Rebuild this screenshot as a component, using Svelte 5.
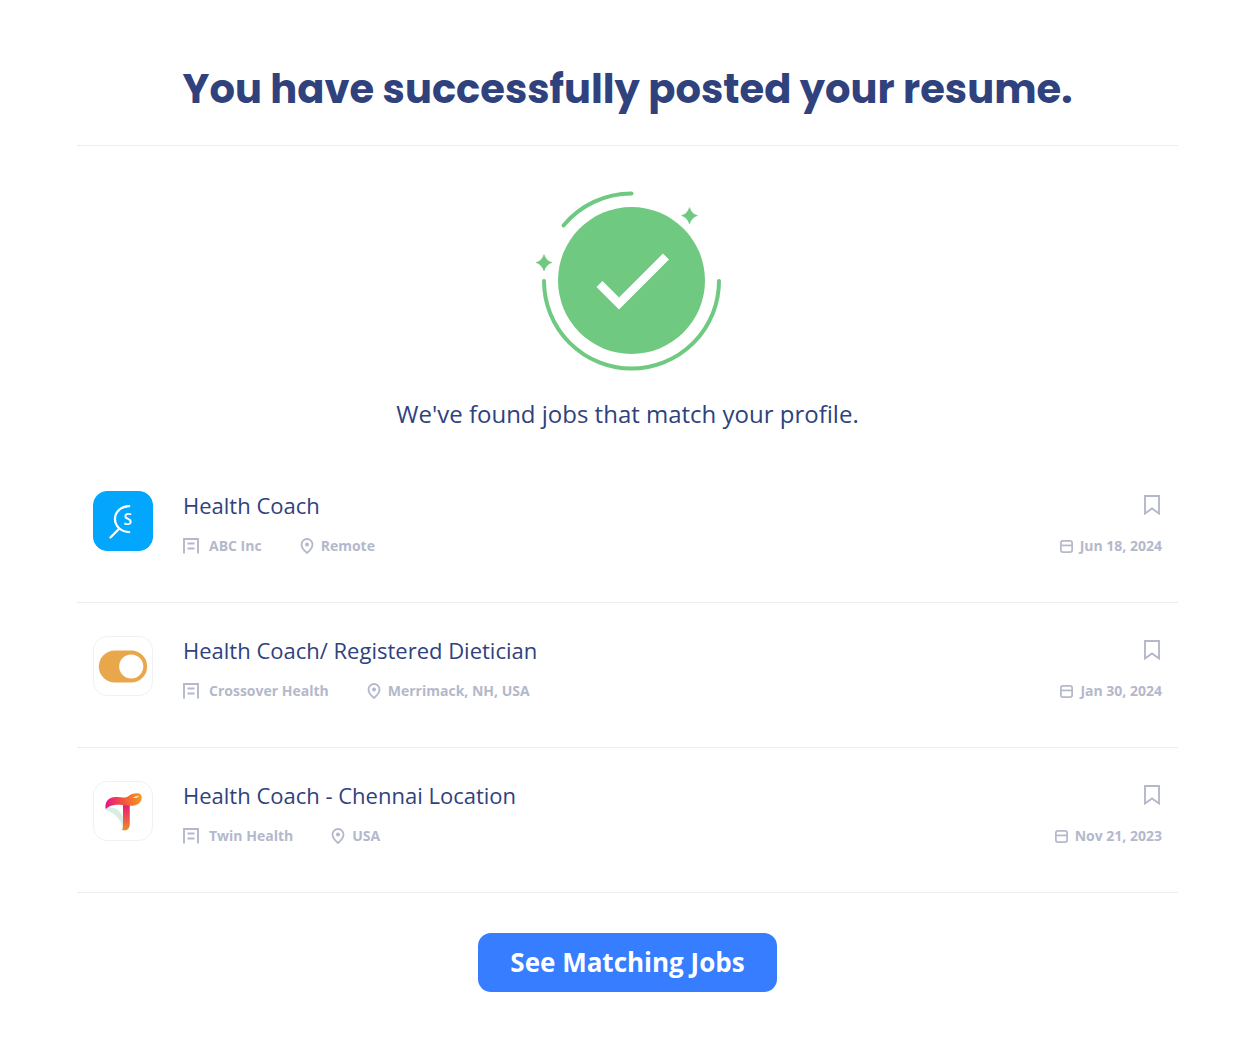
<script lang="ts">
  type Job = {
    title: string
    company: string
    location: string
    date: string
    logo: 'search' | 'toggle' | 'twin'
  }

  const jobs: Job[] = [
    { title: 'Health Coach', company: 'ABC Inc', location: 'Remote', date: 'Jun 18, 2024', logo: 'search' },
    {
      title: 'Health Coach/ Registered Dietician',
      company: 'Crossover Health',
      location: 'Merrimack, NH, USA',
      date: 'Jan 30, 2024',
      logo: 'toggle',
    },
    {
      title: 'Health Coach - Chennai Location',
      company: 'Twin Health',
      location: 'USA',
      date: 'Nov 21, 2023',
      logo: 'twin',
    },
  ]

  let saved = $state<boolean[]>([false, false, false])
</script>

<main>
  <h1>You have successfully posted your resume.</h1>

  <section class="success">
    <svg class="check" viewBox="0 0 192 184" fill="none" aria-hidden="true">
      <circle cx="99.500" cy="92.500" r="73.500" fill="#6fc981" />
      <path d="M67.500 96 87 115.500 134 68.500" stroke="#fff" stroke-width="8.500" />
      <g stroke="#6fc981" stroke-width="4" stroke-linecap="round">
        <path d="M31.500 37.500A88 88 0 0 1 99.500 5.500" />
        <path d="M12 93A87.500 87.500 0 0 0 187 93" />
      </g>
      <g fill="#6fc981" stroke="#6fc981" stroke-width="0.500">
        <path d="M157.500 19.500Q159.500 26 165.500 27.500Q159.500 29.500 157.500 36Q155.500 29.500 149.500 27.500Q155.500 26 157.500 19.500Z" />
        <path d="M12 66.500Q14 73 20 74.500Q14 76.500 12 83Q10 76.500 4 74.500Q10 73 12 66.500Z" />
      </g>
    </svg>
    <p>We've found jobs that match your profile.</p>
  </section>

  <ul class="jobs">
    {#each jobs as job, i}
      <li class="job">
        <div class="logo" class:blue={job.logo === 'search'}>
          {#if job.logo === 'search'}
            <svg viewBox="0 0 60 60" fill="none" aria-hidden="true">
              <path d="M36.500 14.500A14.800 13.500 0 0 0 36.500 41.500M26 38 17 47" stroke="#fff" stroke-width="2.300" stroke-linecap="round" />
              <text x="30.500" y="34" fill="#fff" font-size="16" font-weight="600">S</text>
            </svg>
          {:else if job.logo === 'toggle'}
            <svg viewBox="0 0 60 60" aria-hidden="true">
              <rect x="5" y="14" width="50" height="33" rx="16.500" fill="#e9a74b" />
              <circle cx="38.500" cy="30.500" r="12.500" fill="#fff" />
            </svg>
          {:else}
            <svg viewBox="0 0 60 60" fill="none" aria-hidden="true">
              <defs>
                <linearGradient id="bar" x1="12" y1="24" x2="48" y2="18" gradientUnits="userSpaceOnUse">
                  <stop stop-color="#e5128b" />
                  <stop offset="0.500" stop-color="#f2533f" />
                  <stop offset="1" stop-color="#f59520" />
                </linearGradient>
                <linearGradient id="stem" x1="32" y1="24" x2="34" y2="50" gradientUnits="userSpaceOnUse">
                  <stop stop-color="#e8197d" />
                  <stop offset="1" stop-color="#f28a22" />
                </linearGradient>
              </defs>
              <path d="M12 26Q25 24 30.500 37L30 49Q27 34 12 29Z" fill="#d8eee2" />
              <path d="M30 23H37V44Q36.500 50 32 50H29Q30.500 47 30 42Z" fill="url(#stem)" />
              <path d="M12 28C11 20 15 16 22 15.500C29 15.500 32 17 35 15C39 12 43 11 47 12Q50.500 14 49 19Q46 24.500 40 24.500C32 24.500 29 23.500 23 23.500Q16 24 12 28Z" fill="url(#bar)" />
              <path d="M40 16.500Q43 14 46.500 14.500Q45.500 17 40 16.500Z" fill="#fde3c4" />
            </svg>
          {/if}
        </div>

        <div class="info">
          <h2>{job.title}</h2>
          <div class="meta">
            <span class="company">
              <svg width="16" height="16" viewBox="0 0 16 16" fill="none" stroke="currentColor" stroke-width="1.900" aria-hidden="true">
                <path d="M1 15.500V1H15V15.500M4.500 5.500H11.500M4.500 10.500H11.500" />
              </svg>
              {job.company}
            </span>
            <span class="place">
              <svg width="14" height="16" viewBox="0 0 14 16" fill="none" aria-hidden="true">
                <path d="M7 15C4 12.500 1.500 9.500 1.500 6.500A5.500 5.500 0 0 1 12.500 6.500C12.500 9.500 10 12.500 7 15Z" stroke="currentColor" stroke-width="1.800" />
                <circle cx="7" cy="6.500" r="2" fill="currentColor" />
              </svg>
              {job.location}
            </span>
          </div>
        </div>

        <div class="side">
          <button class="bookmark" aria-label="Save {job.title}" aria-pressed={saved[i]} onclick={() => (saved[i] = !saved[i])}>
            <svg width="16" height="20" viewBox="0 0 16 20" fill={saved[i] ? 'currentColor' : 'none'} aria-hidden="true">
              <path d="M1 1H15V18.500L8 13.500L1 18.500Z" stroke="currentColor" stroke-width="1.900" />
            </svg>
          </button>
          <span class="date">
            <svg width="13" height="13" viewBox="0 0 12 12" fill="none" stroke="currentColor" stroke-width="1.600" aria-hidden="true">
              <rect x="0.800" y="0.800" width="10.400" height="10.400" rx="2" />
              <path d="M1 5H11" />
            </svg>
            {job.date}
          </span>
        </div>
      </li>
    {/each}
  </ul>

  <button class="cta">See Matching Jobs</button>
</main>

<style>
  :global(body) {
    margin: 0;
    background: #fff;
  }

  main {
    display: flex;
    flex-direction: column;
    padding: 59px 74px 48px 77px;
    font-family: 'Open Sans', sans-serif;
    color: #2f427d;
  }

  h1 {
    margin: 0;
    padding-bottom: 26px;
    border-bottom: 1px solid #ededee;
    font-family: Poppins, Inter, sans-serif;
    font-size: 40px;
    font-weight: 700;
    line-height: 60px;
    text-align: center;
  }

  .success {
    display: flex;
    flex-direction: column;
    align-items: center;
    padding-top: 42px;
  }

  .check {
    width: 192px;
    height: 184px;
  }

  .success p {
    margin: 24px 0 0;
    font-size: 24px;
    line-height: 36px;
  }

  .jobs {
    margin: 26px 0 0;
    padding: 0;
    list-style: none;
  }

  .job {
    display: flex;
    align-items: flex-start;
    padding: 33px 16px 46px;
    border-bottom: 1px solid #ededee;
  }

  .logo {
    box-sizing: border-box;
    flex-shrink: 0;
    width: 60px;
    height: 60px;
    border: 1px solid #f1f1f4;
    border-radius: 14px;
    overflow: hidden;
  }

  .logo.blue {
    background: #02a7fd;
    border-color: #02a7fd;
  }

  .logo svg {
    display: block;
    width: 100%;
    height: 100%;
  }

  .info {
    flex: 1;
    margin-left: 30px;
  }

  h2 {
    margin: 0;
    font-size: 22px;
    font-weight: 400;
    line-height: 28px;
  }

  .meta {
    display: flex;
    gap: 38px;
    margin-top: 17px;
    font-size: 14px;
    font-weight: 700;
    line-height: 20px;
    color: #b4b8cb;
  }

  .company,
  .place,
  .date {
    display: flex;
    align-items: center;
  }

  .company {
    gap: 10px;
  }

  .place,
  .date {
    gap: 7px;
  }

  .side {
    display: flex;
    flex-direction: column;
    align-items: flex-end;
    color: #b4b8cb;
  }

  .bookmark {
    display: flex;
    margin: 4px 2px 0 0;
    padding: 0;
    border: 0;
    background: none;
    color: inherit;
    cursor: pointer;
  }

  .date {
    margin-top: 21px;
    font-size: 14px;
    font-weight: 700;
    line-height: 20px;
  }

  .cta {
    align-self: center;
    margin-top: 40px;
    padding: 0 32px;
    border: 0;
    border-radius: 13px;
    background: #377dff;
    color: #fff;
    font-family: inherit;
    font-size: 26px;
    font-weight: 700;
    line-height: 59px;
    cursor: pointer;
  }
</style>
